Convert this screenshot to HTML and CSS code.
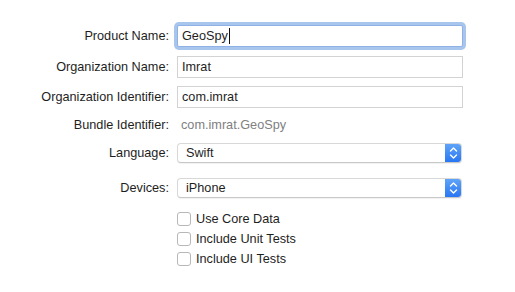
FILE: index.html
```html
<!DOCTYPE html>
<html>
<head>
<meta charset="utf-8">
<link rel="stylesheet" href="styles.css">
</head>
<body>
<div class="form">
  <div class="row r1">
    <div class="label">Product Name:</div>
    <div class="field focus"><span>GeoSpy</span><span class="caret"></span></div>
  </div>
  <div class="row r2">
    <div class="label">Organization Name:</div>
    <div class="field">Imrat</div>
  </div>
  <div class="row r3">
    <div class="label">Organization Identifier:</div>
    <div class="field">com.imrat</div>
  </div>
  <div class="row r4">
    <div class="label">Bundle Identifier:</div>
    <div class="static">com.imrat.GeoSpy</div>
  </div>
  <div class="row r5">
    <div class="label">Language:</div>
    <div class="popup"><span class="ptext">Swift</span><span class="stepper"><svg width="17" height="20" viewBox="0 0 17 20"><path d="M5.5 8 L8.5 5 L11.5 8" fill="none" stroke="#fff" stroke-width="1.4" stroke-linecap="round" stroke-linejoin="round"/><path d="M5.5 12 L8.5 15 L11.5 12" fill="none" stroke="#fff" stroke-width="1.4" stroke-linecap="round" stroke-linejoin="round"/></svg></span></div>
  </div>
  <div class="row r6">
    <div class="label">Devices:</div>
    <div class="popup"><span class="ptext">iPhone</span><span class="stepper"><svg width="17" height="20" viewBox="0 0 17 20"><path d="M5.5 8 L8.5 5 L11.5 8" fill="none" stroke="#fff" stroke-width="1.4" stroke-linecap="round" stroke-linejoin="round"/><path d="M5.5 12 L8.5 15 L11.5 12" fill="none" stroke="#fff" stroke-width="1.4" stroke-linecap="round" stroke-linejoin="round"/></svg></span></div>
  </div>
  <div class="checks">
    <label class="check"><span class="box"></span><span>Use Core Data</span></label>
    <label class="check"><span class="box"></span><span>Include Unit Tests</span></label>
    <label class="check"><span class="box"></span><span>Include UI Tests</span></label>
  </div>
</div>
</body>
</html>
```

FILE: styles.css
```css
html, body {
  margin: 0;
  padding: 0;
  background: #ffffff;
}
body {
  font-family: "Liberation Sans", Arial, sans-serif;
  font-size: 12.7px;
  color: #1e1e1e;
}
.form {
  display: flex;
  flex-direction: column;
  padding-top: 25px;
}
.row {
  display: flex;
  align-items: center;
  height: 22px;
}
.r2 { margin-top: 9px; }
.r3 { margin-top: 8px; }
.r4 { margin-top: 6px; }
.r5 { margin-top: 7px; height: 20px; }
.r6 { margin-top: 15px; height: 20px; }
.label {
  width: 169px;
  text-align: right;
  flex: none;
}
.field {
  margin-left: 8px;
  width: 286px;
  height: 22px;
  box-sizing: border-box;
  border: 1px solid #d3d3d3;
  padding-left: 4px;
  display: flex;
  align-items: center;
  background: #fff;
}
.field.focus {
  border-color: #8eb2e6;
  border-radius: 2px;
  box-shadow: 0 0 0 3px #a8c5ee;
}
.caret {
  display: inline-block;
  width: 1px;
  height: 16px;
  background: #111;
  margin-left: 1px;
}
.static {
  margin-left: 12px;
  color: #808080;
}
.popup {
  margin-left: 8px;
  width: 285px;
  height: 20px;
  box-sizing: border-box;
  border: 1px solid #d8d8d8;
  border-bottom-color: #c8c8c8;
  border-radius: 4px;
  background: #fff;
  box-shadow: 0 1px 1px rgba(0,0,0,0.06);
  display: flex;
  align-items: center;
  justify-content: space-between;
  overflow: hidden;
}
.ptext {
  padding-left: 8px;
}
.stepper {
  width: 17px;
  height: 20px;
  margin-top: -1px;
  margin-bottom: -1px;
  margin-right: -1px;
  background: linear-gradient(#63a6f8, #2574f3);
  border-radius: 0 4px 4px 0;
  display: flex;
}
.checks {
  display: flex;
  flex-direction: column;
  gap: 6px;
  margin-top: 14px;
  margin-left: 177px;
}
.check {
  display: flex;
  align-items: center;
  height: 14px;
}
.box {
  width: 14px;
  height: 14px;
  box-sizing: border-box;
  border: 1px solid #b8b8b8;
  border-radius: 3px;
  background: #fff;
  margin-right: 5px;
}
```
